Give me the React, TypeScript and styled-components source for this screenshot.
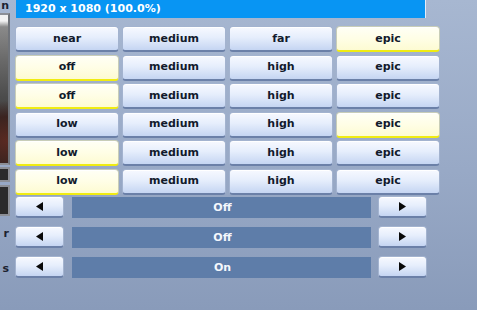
import React, { FC } from 'react';
import styled, { createGlobalStyle, css } from 'styled-components';

const GlobalStyle = createGlobalStyle`
  html, body {
    margin: 0;
    padding: 0;
  }
  body {
    font-family: 'DejaVu Sans', 'Liberation Sans', sans-serif;
    overflow: hidden;
  }
`;

const Page = styled.div`
  display: flex;
  width: 477px;
  height: 310px;
  overflow: hidden;
  background: linear-gradient(180deg, #a7b7d1 0%, #98a9c6 55%, #899bba 100%);
`;

const Side = styled.div`
  display: flex;
  flex-direction: column;
  align-items: flex-end;
  width: 10px;
  flex-shrink: 0;
  overflow: hidden;
`;

const SideLabel = styled.div<{ $top: number }>`
  margin-top: ${(p) => p.$top}px;
  margin-right: 1px;
  height: 11px;
  line-height: 11px;
  font-size: 11px;
  font-weight: bold;
  color: #1c2230;
  white-space: nowrap;
`;

const Picture = styled.div`
  margin-top: 2px;
  width: 120px;
  height: 152px;
  flex-shrink: 0;
  border: 2px solid #8c8f96;
  border-right-color: #6f737a;
  box-sizing: border-box;
  background:
    radial-gradient(ellipse 60px 40px at 100% 85%, #5a2a22 0%, #3b2420 60%, transparent 100%),
    linear-gradient(180deg, #f2f2f2 0%, #f2f2f2 4%, #8a8a8a 8%, #6a6a6a 30%, #4c4c4c 55%, #2e2a2a 100%);
`;

const Thumb = styled.div<{ $h: number; $top: number }>`
  margin-top: ${(p) => p.$top}px;
  width: 40px;
  height: ${(p) => p.$h}px;
  flex-shrink: 0;
  box-sizing: border-box;
  border: 2px solid #8c8f96;
  background: #2b2b2b;
`;

const Main = styled.div`
  display: flex;
  flex-direction: column;
  margin-left: 5px;
  width: 430px;
`;

const Header = styled.div`
  margin-left: 1px;
  width: 400px;
  height: 18px;
  padding-left: 9px;
  border-right: 1px solid #e4ecfa;
  background: #0895f3;
  color: #ffffff;
  font-size: 11px;
  font-weight: bold;
  line-height: 18px;
`;

const Grid = styled.div`
  display: grid;
  grid-template-columns: repeat(4, 104px);
  column-gap: 3px;
  row-gap: 2.5px;
  margin-top: 8px;
`;

const buttonBase = css`
  box-sizing: border-box;
  border: 1px solid #a3b3cf;
  border-bottom: 2px solid #6b80a8;
  border-radius: 4px;
  background: linear-gradient(180deg, #f7f9ff 0%, #e6eefc 45%, #c5d5f2 100%);
  box-shadow: inset 0 1px 0 #ffffff;
  color: #121a2c;
  font-size: 11px;
  font-weight: bold;
  display: flex;
  align-items: center;
  justify-content: center;
`;

const Option = styled.div<{ $selected?: boolean }>`
  ${buttonBase};
  height: 26px;
  padding-bottom: 1px;
  ${(p) =>
    p.$selected &&
    css`
      border-color: #c8cdb8;
      border-bottom-color: #f0ec12;
      background: linear-gradient(180deg, #fffff6 0%, #fffee6 50%, #fdfbd2 100%);
    `}
`;

const Sliders = styled.div`
  display: flex;
  flex-direction: column;
  gap: 8px;
  margin-top: 1.5px;
`;

const SliderRow = styled.div`
  display: flex;
  align-items: flex-start;
  width: 412px;
`;

const ArrowButton = styled.div`
  ${buttonBase};
  width: 49px;
  height: 22px;
  flex-shrink: 0;
`;

const Bar = styled.div`
  margin: 1px 7px 0 8px;
  width: 299px;
  height: 21px;
  background: #5e7da9;
  color: #f4f7fc;
  font-size: 11px;
  font-weight: bold;
  display: flex;
  align-items: center;
  justify-content: center;
  padding-left: 2px;
  box-sizing: border-box;
`;

const Arrow: FC<{ dir: 'left' | 'right' }> = ({ dir }) => (
  <svg width="7" height="9" viewBox="0 0 7 9">
    {dir === 'left' ? (
      <polygon points="7,0 7,9 0,4.5" fill="#0a0a0a" />
    ) : (
      <polygon points="0,0 0,9 7,4.5" fill="#0a0a0a" />
    )}
  </svg>
);

const rows: { label: string; selected?: boolean }[][] = [
  [{ label: 'near' }, { label: 'medium' }, { label: 'far' }, { label: 'epic', selected: true }],
  [{ label: 'off', selected: true }, { label: 'medium' }, { label: 'high' }, { label: 'epic' }],
  [{ label: 'off', selected: true }, { label: 'medium' }, { label: 'high' }, { label: 'epic' }],
  [{ label: 'low' }, { label: 'medium' }, { label: 'high' }, { label: 'epic', selected: true }],
  [{ label: 'low', selected: true }, { label: 'medium' }, { label: 'high' }, { label: 'epic' }],
  [{ label: 'low', selected: true }, { label: 'medium' }, { label: 'high' }, { label: 'epic' }],
];

const toggles = ['Off', 'Off', 'On'];

const App: FC = () => {
  return (
    <>
      <GlobalStyle />
      <Page>
        <Side>
          <SideLabel $top={0}>n</SideLabel>
          <Picture />
          <Thumb $top={2} $h={15} />
          <Thumb $top={3} $h={31} />
          <SideLabel $top={12}>r</SideLabel>
          <SideLabel $top={24}>s</SideLabel>
        </Side>
        <Main>
          <Header>1920 x 1080 (100.0%)</Header>
          <Grid>
            {rows.map((row, r) =>
              row.map((cell, c) => (
                // eslint-disable-next-line react/no-array-index-key
                <Option key={`${r}-${c}`} $selected={cell.selected}>
                  {cell.label}
                </Option>
              )),
            )}
          </Grid>
          <Sliders>
            {toggles.map((value, i) => (
              // eslint-disable-next-line react/no-array-index-key
              <SliderRow key={i}>
                <ArrowButton>
                  <Arrow dir="left" />
                </ArrowButton>
                <Bar>{value}</Bar>
                <ArrowButton>
                  <Arrow dir="right" />
                </ArrowButton>
              </SliderRow>
            ))}
          </Sliders>
        </Main>
      </Page>
    </>
  );
};

export default App;
